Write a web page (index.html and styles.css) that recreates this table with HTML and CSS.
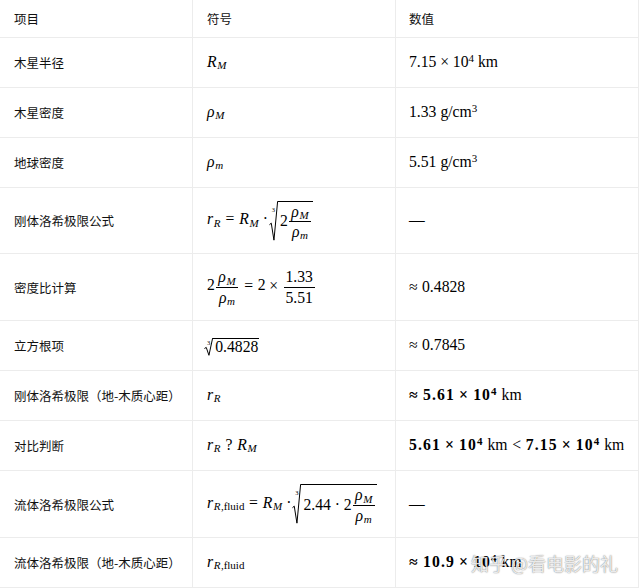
FILE: index.html
```html
<!DOCTYPE html>
<html lang="zh">
<head>
<meta charset="utf-8">
<title>洛希极限</title>
<link rel="stylesheet" href="styles.css">
</head>
<body>
<div class="table">
  <div class="row head">
    <div class="c c1">项目</div>
    <div class="c c2">符号</div>
    <div class="c c3">数值</div>
  </div>
  <div class="row">
    <div class="c c1">木星半径</div>
    <div class="c c2"><span class="m"><i>R</i><sub><i>M</i></sub></span></div>
    <div class="c c3"><span class="m">7.15<span class="bin">×</span>10<sup>4</sup><span class="sp"></span>km</span></div>
  </div>
  <div class="row">
    <div class="c c1">木星密度</div>
    <div class="c c2"><span class="m"><i>ρ</i><sub><i>M</i></sub></span></div>
    <div class="c c3"><span class="m">1.33<span class="sp"></span>g/cm<sup>3</sup></span></div>
  </div>
  <div class="row">
    <div class="c c1">地球密度</div>
    <div class="c c2"><span class="m"><i>ρ</i><sub><i>m</i></sub></span></div>
    <div class="c c3"><span class="m">5.51<span class="sp"></span>g/cm<sup>3</sup></span></div>
  </div>
  <div class="row tall">
    <div class="c c1">刚体洛希极限公式</div>
    <div class="c c2"><span class="m"><i>r</i><sub><i>R</i></sub><span class="rel">=</span><i>R</i><sub><i>M</i></sub><span class="bin">·</span><span class="root big"><span class="idx">3</span><span class="surd"><svg viewBox="0 0 10 100" preserveAspectRatio="none"><path d="M0.5 60 L2.5 56 L5.5 99 L9.6 0.5" /></svg></span><span class="rad">2<span class="frac"><span class="num"><i>ρ</i><sub><i>M</i></sub></span><span class="den"><i>ρ</i><sub><i>m</i></sub></span></span></span></span></span></div>
    <div class="c c3"><span class="m">—</span></div>
  </div>
  <div class="row tall2">
    <div class="c c1">密度比计算</div>
    <div class="c c2"><span class="m">2<span class="frac"><span class="num"><i>ρ</i><sub><i>M</i></sub></span><span class="den"><i>ρ</i><sub><i>m</i></sub></span></span><span class="rel">=</span>2<span class="bin">×</span><span class="frac"><span class="num">1.33</span><span class="den">5.51</span></span></span></div>
    <div class="c c3"><span class="m">≈<span class="relr"></span>0.4828</span></div>
  </div>
  <div class="row">
    <div class="c c1">立方根项</div>
    <div class="c c2"><span class="m"><span class="root small"><span class="idx">3</span><span class="surd"><svg viewBox="0 0 10 100" preserveAspectRatio="none"><path d="M0.5 60 L2.5 54 L5.5 99 L9.6 0.5" /></svg></span><span class="rad">0.4828</span></span></span></div>
    <div class="c c3"><span class="m">≈<span class="relr"></span>0.7845</span></div>
  </div>
  <div class="row">
    <div class="c c1">刚体洛希极限（地-木质心距）</div>
    <div class="c c2"><span class="m"><i>r</i><sub><i>R</i></sub></span></div>
    <div class="c c3"><span class="m"><b>≈<span class="relr"></span>5.61<span class="bin">×</span>10<sup>4</sup></b><span class="sp"></span>km</span></div>
  </div>
  <div class="row">
    <div class="c c1">对比判断</div>
    <div class="c c2"><span class="m"><i>r</i><sub><i>R</i></sub><span class="q">?</span><i>R</i><sub><i>M</i></sub></span></div>
    <div class="c c3"><span class="m"><b>5.61<span class="bin">×</span>10<sup>4</sup></b><span class="sp"></span>km<span class="rel">&lt;</span><b>7.15<span class="bin">×</span>10<sup>4</sup></b><span class="sp"></span>km</span></div>
  </div>
  <div class="row tall2">
    <div class="c c1">流体洛希极限公式</div>
    <div class="c c2"><span class="m"><i>r</i><sub><i>R</i>,fluid</sub><span class="rel">=</span><i>R</i><sub><i>M</i></sub><span class="bin">·</span><span class="root big"><span class="idx">3</span><span class="surd"><svg viewBox="0 0 10 100" preserveAspectRatio="none"><path d="M0.5 60 L2.5 56 L5.5 99 L9.6 0.5" /></svg></span><span class="rad">2.44<span class="bin">·</span>2<span class="frac"><span class="num"><i>ρ</i><sub><i>M</i></sub></span><span class="den"><i>ρ</i><sub><i>m</i></sub></span></span></span></span></span></div>
    <div class="c c3"><span class="m">—</span></div>
  </div>
  <div class="row">
    <div class="c c1">流体洛希极限（地-木质心距）</div>
    <div class="c c2"><span class="m"><i>r</i><sub><i>R</i>,fluid</sub></span></div>
    <div class="c c3"><span class="m"><b>≈<span class="relr"></span>10.9<span class="bin">×</span>10<sup>4</sup></b><span class="sp"></span>km</span></div>
  </div>
</div>
<div class="wm">知乎 @看电影的礼</div>
</body>
</html>
```

FILE: styles.css
```css
html, body {
  margin: 0;
  padding: 0;
  background: #ffffff;
}

.table {
  width: 639px;
}

.row {
  display: grid;
  grid-template-columns: 193px 203px 243px;
  height: 50px;
  box-sizing: border-box;
  border-bottom: 1px solid #ececec;
}

.row.head {
  height: 38px;
}

.row.tall {
  height: 66px;
}

.row.tall2 {
  height: 67px;
}

.c {
  display: flex;
  align-items: center;
  box-sizing: border-box;
  padding-left: 14px;
  border-right: 1px solid #ececec;
  font-family: "Noto Sans CJK SC", "Noto Sans", sans-serif;
  font-size: 12.5px;
  color: #111111;
  white-space: nowrap;
  overflow: hidden;
}

.c3 {
  padding-left: 13px;
}

.m {
  font-family: "Liberation Serif", "Times New Roman", serif;
  font-size: 15.7px;
  color: #000;
  white-space: nowrap;
  line-height: 1.2;
}

.m i {
  font-style: italic;
  margin-right: 0.04em;
}

.m b {
  font-weight: bold;
  letter-spacing: 0.07em;
}

.m b .bin {
  margin: 0 0.26em;
}

.m sub {
  font-size: 0.7em;
  vertical-align: -0.22em;
  line-height: 0;
}

.m sup {
  font-size: 0.7em;
  vertical-align: 0.45em;
  line-height: 0;
}

.bin {
  margin: 0 0.24em;
}

.rel {
  margin: 0 0.3em;
}

.relr {
  display: inline-block;
  width: 0.28em;
}

.sp {
  display: inline-block;
  width: 0.25em;
}

.q {
  margin: 0 0.3em;
}

.frac {
  display: inline-flex;
  flex-direction: column;
  align-items: stretch;
  vertical-align: middle;
  text-align: center;
  margin: 0 0.1em;
  line-height: 1.1;
}

.frac .num {
  border-bottom: 1px solid #000;
  padding: 0 0.12em 0.08em;
}

.frac .den {
  padding: 0.05em 0.12em 0;
}

.root {
  display: inline-flex;
  align-items: stretch;
  vertical-align: middle;
}

.root .idx {
  font-size: 6.5px;
  line-height: 1;
  align-self: flex-start;
  margin-right: -6px;
  margin-left: 0;
  position: relative;
  z-index: 1;
}

.root.big .idx {
  margin-top: 6px;
}

.root.small .idx {
  margin-top: 2px;
}

.root .surd {
  display: block;
  position: relative;
  width: 9px;
}

.root .surd svg {
  position: absolute;
  left: 0;
  top: 0;
  width: 100%;
  height: 100%;
  overflow: visible;
}

.root .surd path {
  fill: none;
  stroke: #000;
  stroke-width: 1;
  vector-effect: non-scaling-stroke;
}

.root .rad {
  display: inline-flex;
  align-items: center;
  border-top: 1px solid #000;
  padding: 1px 1px 0 2px;
}

.root.small .rad {
  padding-top: 0;
  line-height: 1.05;
}

.wm {
  position: absolute;
  left: 471px;
  top: 550px;
  font-family: "Noto Sans CJK SC", sans-serif;
  font-size: 18px;
  color: rgba(255, 255, 255, 0.85);
  text-shadow: 0 0 1px rgba(0, 0, 0, 0.5), 0 0 2px rgba(0, 0, 0, 0.2);
  white-space: nowrap;
}
```
